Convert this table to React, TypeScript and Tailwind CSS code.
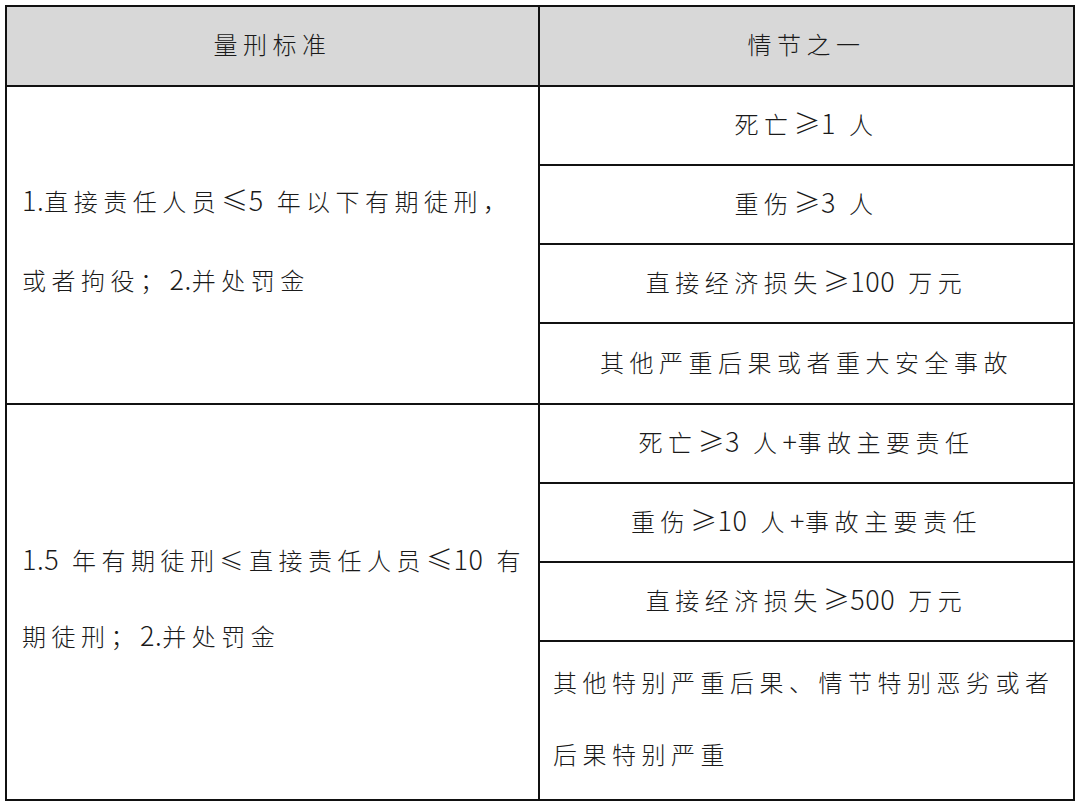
const font = {
  fontFamily: '"Noto Sans CJK SC", sans-serif',
};

const topRight = ["死亡≥1 人", "重伤≥3 人", "直接经济损失≥100 万元", "其他严重后果或者重大安全事故"];
const bottomRight = ["死亡≥3 人+事故主要责任", "重伤≥10 人+事故主要责任", "直接经济损失≥500 万元"];

// numbers (and a ≤/≥ glued to them) sit tight and a bit larger, like the source doc
function Num({ s }: { s: string }) {
  const bits = s.split(/( )/);
  return (
    <span className="text-[27px] leading-none tracking-[0.5px]">
      {bits.map((b, i) =>
        b === " " ? (
          <span key={i} className="tracking-[7px]">
            {" "}
          </span>
        ) : (
          b
        )
      )}
    </span>
  );
}

function Txt({ s }: { s: string }) {
  const parts = s.match(/[≤≥]?[0-9.+ ]+|[^0-9.+ ]+?(?=[≤≥][0-9]|$)|[^0-9.+ ]+/g) ?? [];
  return (
    <>
      {parts.map((p, i) => (/[0-9+]/.test(p) ? <Num key={i} s={p} /> : <span key={i}>{p}</span>))}
    </>
  );
}

function Cell({ text, last }: { text: string; last?: boolean }) {
  return (
    <div
      className={
        "flex h-[79px] items-center justify-center pb-[4px] " + (last ? "" : "border-b-2 border-[#111]")
      }
    >
      <p className="leading-[40px]">
        <Txt s={text} />
      </p>
    </div>
  );
}

export default function App() {
  return (
    <div className="h-[810px] w-[1080px] bg-white p-[5px] text-[#1a1a1a]" style={font}>
      <div className="w-[1070px] border-2 border-[#111] text-[24px] font-light tracking-[5.5px]">
        <div className="grid h-[80px] grid-cols-2 border-b-2 border-[#111] bg-[#d8d8d8]">
          <div className="flex items-center justify-center border-r-2 border-[#111] pb-[4px]">量刑标准</div>
          <div className="flex items-center justify-center pb-[4px]">情节之一</div>
        </div>

        <div className="grid grid-cols-2 border-b-2 border-[#111]">
          <div className="flex items-center border-r-2 border-[#111] pb-[10px] pl-[15px] pr-2 leading-[79px]">
            <p>
              <Txt s="1.直接责任人员≤5 年以下有期徒刑，或者拘役；2.并处罚金" />
            </p>
          </div>
          <div className="flex flex-col">
            {topRight.map((t, i) => (
              <Cell key={t} text={t} last={i === topRight.length - 1} />
            ))}
          </div>
        </div>

        <div className="grid grid-cols-2">
          <div className="flex items-center border-r-2 border-[#111] pb-[8px] pl-[15px] pr-2 leading-[76px]">
            <p>
              <Txt s="1.5 年有期徒刑≤直接责任人员≤10 有期徒刑；2.并处罚金" />
            </p>
          </div>
          <div className="flex flex-col">
            {bottomRight.map((t) => (
              <Cell key={t} text={t} />
            ))}
            <div className="flex h-[157px] items-center px-[13px] pb-[6px] leading-[72px]">
              <p>其他特别严重后果、情节特别恶劣或者后果特别严重</p>
            </div>
          </div>
        </div>
      </div>
    </div>
  );
}
